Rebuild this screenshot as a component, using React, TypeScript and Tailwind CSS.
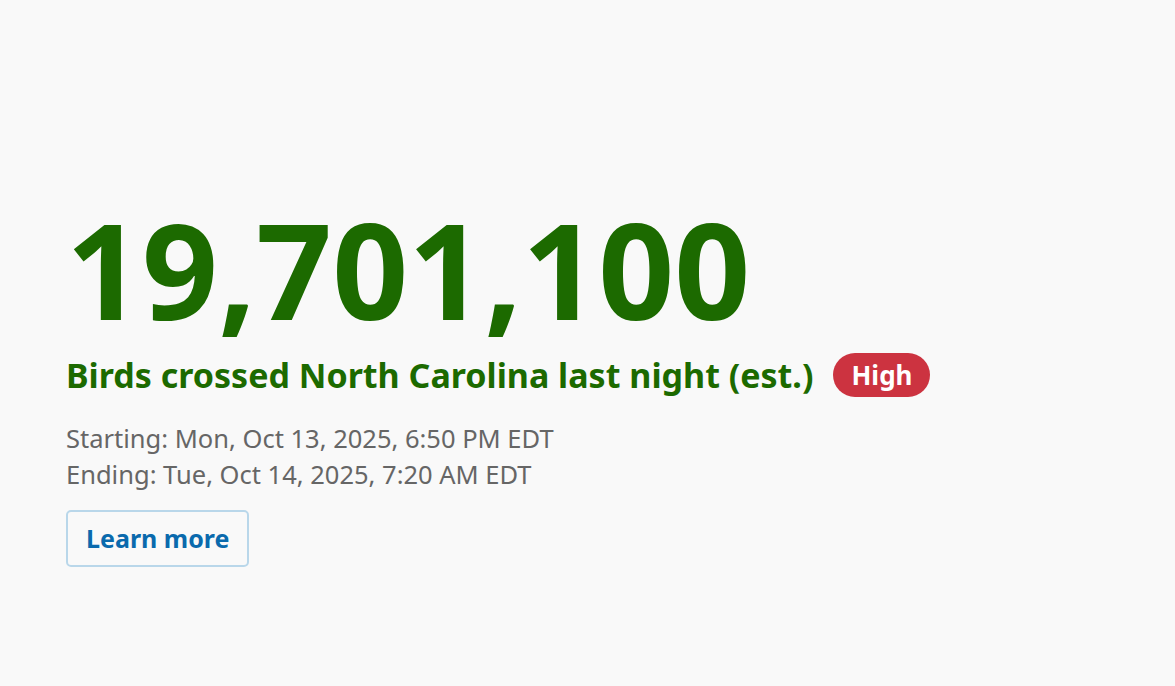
const App = () => {
  return (
    <div
      className="min-h-screen bg-[#f9f9f9] px-[66px] pt-[198px]"
      style={{ fontFamily: '"Noto Sans", "Open Sans", sans-serif' }}
    >
      <div className="flex flex-col items-start">
        <h1 className="text-[133px] font-bold leading-[141px] text-[#1c6a00]">
          19,701,100
        </h1>
        <div className="mt-[14px] flex items-center gap-5">
          <h2 className="text-[34px] font-bold leading-[44px] text-[#1c6a00]">
            Birds crossed North Carolina last night (est.)
          </h2>
          <span className="rounded-full bg-[#cc3340] px-[18px] py-[4px] text-[26px] font-bold leading-[36px] text-white">
            High
          </span>
        </div>
        <div className="mt-[23px] text-[25.5px] leading-[36px] text-[#666666]">
          <p>Starting: Mon, Oct 13, 2025, 6:50 PM EDT</p>
          <p>Ending: Tue, Oct 14, 2025, 7:20 AM EDT</p>
        </div>
        <button className="mt-[18px] rounded-[5px] border-2 border-[#b9d7ea] px-[18px] py-[9px] text-[25px] font-bold leading-[35px] text-[#0a6aad]">
          Learn more
        </button>
      </div>
    </div>
  );
};

export default App;
